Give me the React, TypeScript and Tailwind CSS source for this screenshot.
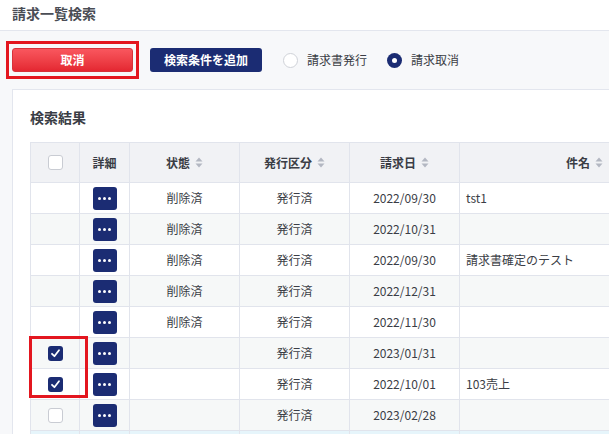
import React from "react"

const font = { fontFamily: '"Noto Sans CJK JP", "Noto Sans", sans-serif' }

type Row = { checked: boolean | null; status: string; kind: string; date: string; name: string }

const rows: Row[] = [
    { checked: null, status: "削除済", kind: "発行済", date: "2022/09/30", name: "tst1" },
    { checked: null, status: "削除済", kind: "発行済", date: "2022/10/31", name: "" },
    { checked: null, status: "削除済", kind: "発行済", date: "2022/09/30", name: "請求書確定のテスト" },
    { checked: null, status: "削除済", kind: "発行済", date: "2022/12/31", name: "" },
    { checked: null, status: "削除済", kind: "発行済", date: "2022/11/30", name: "" },
    { checked: true, status: "", kind: "発行済", date: "2023/01/31", name: "" },
    { checked: true, status: "", kind: "発行済", date: "2022/10/01", name: "103売上" },
    { checked: false, status: "", kind: "発行済", date: "2023/02/28", name: "" },
]

function SortIcon() {
    return (
        <svg width="8" height="11" viewBox="0 0 8 11" className="ml-[5px] shrink-0">
            <path d="M4 0.5 L7.5 4.5 H0.5 Z" fill="#b3b7c2" />
            <path d="M4 10.5 L7.5 6.5 H0.5 Z" fill="#b3b7c2" />
        </svg>
    )
}

function Checkbox({ checked }: { checked: boolean }) {
    if (checked) {
        return (
            <span className="flex h-[15px] w-[15px] items-center justify-center rounded-[3px] bg-[#1b2c73]">
                <svg width="11" height="11" viewBox="0 0 11 11">
                    <path d="M2 5.8 L4.4 8.2 L9 2.2" stroke="#fff" strokeWidth="1.8" fill="none" strokeLinecap="round" strokeLinejoin="round" />
                </svg>
            </span>
        )
    }
    return <span className="block h-[15px] w-[15px] rounded-[3px] border border-[#c9ccd3] bg-white" />
}

function DetailButton() {
    return (
        <span className="flex h-[23px] w-[24px] items-center justify-center gap-[2px] rounded-[3px] bg-[#1b2c73]">
            <span className="h-[3px] w-[3px] rounded-full bg-white" />
            <span className="h-[3px] w-[3px] rounded-full bg-white" />
            <span className="h-[3px] w-[3px] rounded-full bg-white" />
        </span>
    )
}

export default function App() {
    return (
        <div className="h-[434px] w-[609px] overflow-hidden bg-[#f7f8fa] text-[#3a3d45]" style={font}>
            {/* page header */}
            <div className="h-[31px] border-b border-[#e3e6ee] bg-white pl-[12px] pt-[3px] text-[14px] leading-[20px] font-bold text-[#4a4d55]">
                請求一覧検索
            </div>

            {/* toolbar */}
            <div className="flex items-center pl-[6px] pt-[10px] pb-[10px]">
                <div className="border-[3px] border-[#e3161f] px-[3px] py-[4px]">
                    <button className="flex h-[24px] w-[121px] items-center justify-center rounded-[3px] border border-[#d8323a] bg-gradient-to-b from-[#f9565e] to-[#e42631] text-[12px] font-bold text-white">
                        取消
                    </button>
                </div>
                <button className="ml-[11px] flex h-[24px] w-[112px] items-center justify-center rounded-[3px] bg-[#1b2c73] text-[12px] font-bold text-white">
                    検索条件を追加
                </button>
                <label className="ml-[21px] flex items-center text-[12px]">
                    <span className="block h-[15px] w-[15px] rounded-full border border-[#cfd2d8] bg-white" />
                    <span className="ml-[9px]">請求書発行</span>
                </label>
                <label className="ml-[20px] flex items-center text-[12px]">
                    <span className="flex h-[15px] w-[15px] items-center justify-center rounded-full bg-[#1b2c73]">
                        <span className="h-[5px] w-[5px] rounded-full bg-white" />
                    </span>
                    <span className="ml-[9px]">請求取消</span>
                </label>
            </div>

            {/* results card */}
            <div className="ml-[12px] w-[700px] border border-[#e3e6ee] bg-white pl-[17px] pt-[17px] pb-[20px]">
                <h2 className="text-[14px] leading-[20px] font-bold text-[#3a3d45]">検索結果</h2>
                <div className="relative mt-[15px]">
                    <table className="table-fixed border-collapse text-[12px]">
                        <colgroup>
                            <col className="w-[49px]" />
                            <col className="w-[50px]" />
                            <col className="w-[110px]" />
                            <col className="w-[110px]" />
                            <col className="w-[110px]" />
                            <col className="w-[250px]" />
                        </colgroup>
                        <thead>
                            <tr className="h-[40px] bg-[#f1f2f5] font-bold">
                                <th className="border border-[#e1e4ec]">
                                    <div className="flex justify-center">
                                        <Checkbox checked={false} />
                                    </div>
                                </th>
                                <th className="border border-[#e1e4ec]">詳細</th>
                                {["状態", "発行区分", "請求日", "件名"].map((h) => (
                                    <th key={h} className="border border-[#e1e4ec]">
                                        <div className="flex items-center justify-center">
                                            {h}
                                            <SortIcon />
                                        </div>
                                    </th>
                                ))}
                            </tr>
                        </thead>
                        <tbody>
                            {rows.map((r, i) => (
                                <tr key={i} className={i % 2 === 0 ? "h-[31px] bg-white" : "h-[31px] bg-[#f6f8f8]"}>
                                    <td className="border border-[#e1e4ec]">
                                        {r.checked !== null && (
                                            <div className="flex justify-center">
                                                <Checkbox checked={r.checked} />
                                            </div>
                                        )}
                                    </td>
                                    <td className="border border-[#e1e4ec]">
                                        <div className="flex justify-center">
                                            <DetailButton />
                                        </div>
                                    </td>
                                    <td className="border border-[#e1e4ec] text-center">{r.status}</td>
                                    <td className="border border-[#e1e4ec] text-center">{r.kind}</td>
                                    <td className="border border-[#e1e4ec] text-center">{r.date}</td>
                                    <td className="border border-[#e1e4ec] pl-[6px]">{r.name}</td>
                                </tr>
                            ))}
                            <tr className="h-[31px] bg-[#e6f5fb]">
                                <td className="border border-[#e1e4ec]" />
                                <td className="border border-[#e1e4ec]" />
                                <td className="border border-[#e1e4ec]" />
                                <td className="border border-[#e1e4ec]" />
                                <td className="border border-[#e1e4ec]" />
                                <td className="border border-[#e1e4ec]" />
                            </tr>
                        </tbody>
                    </table>
                    {/* highlight around the checked rows */}
                    <div className="pointer-events-none absolute left-[-1px] top-[194px] h-[62px] w-[59px] border-[3px] border-[#e3161f]" />
                </div>
            </div>
        </div>
    )
}
